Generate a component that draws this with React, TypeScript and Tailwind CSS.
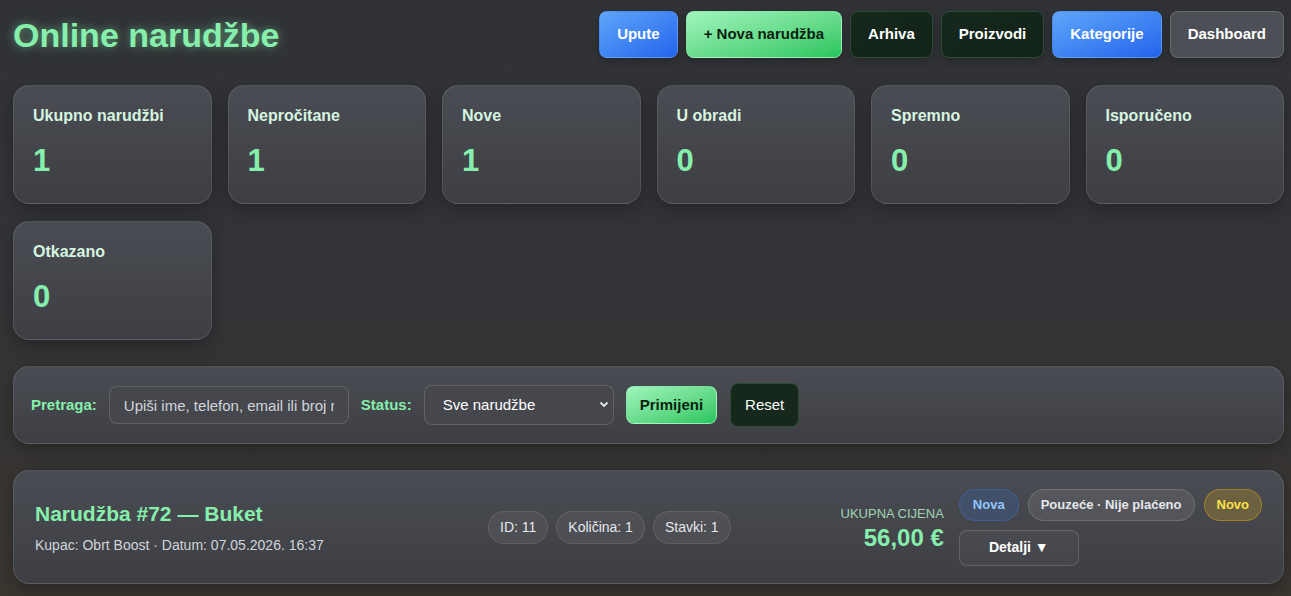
import React from 'react';

const stats = [
    { label: 'Ukupno narudžbi', value: 1 },
    { label: 'Nepročitane', value: 1 },
    { label: 'Nove', value: 1 },
    { label: 'U obradi', value: 0 },
    { label: 'Spremno', value: 0 },
    { label: 'Isporučeno', value: 0 },
    { label: 'Otkazano', value: 0 },
];

const navButtons = [
    { label: 'Upute', cls: 'bg-gradient-to-br from-[#60a5fa] to-[#2563eb] text-white border-[#60a5fa]/40' },
    { label: '+ Nova narudžba', cls: 'bg-gradient-to-br from-[#9ef5bd] to-[#22c55e] text-[#0b1f12] border-[#bbf7d0]/50' },
    { label: 'Arhiva', cls: 'bg-gradient-to-br from-[#16291d] to-[#122318] text-white border-[#2c4a36]' },
    { label: 'Proizvodi', cls: 'bg-gradient-to-br from-[#16291d] to-[#122318] text-white border-[#2c4a36]' },
    { label: 'Kategorije', cls: 'bg-gradient-to-br from-[#60a5fa] to-[#2563eb] text-white border-[#60a5fa]/40' },
    { label: 'Dashboard', cls: 'bg-[#4d4f56] text-white border-white/15' },
];

const card = 'rounded-2xl border border-white/10 bg-gradient-to-b from-[#4a4c53] to-[#3d3f44] shadow-[0_6px_18px_rgba(0,0,0,0.28)]';

export default function App() {
    return (
        <div
            className="min-h-[596px] bg-gradient-to-b from-[#303236] via-[#333437] to-[#3a352f] pl-[13px] pr-[7px] pt-[11px] pb-4 text-white"
            style={{ fontFamily: '"Liberation Sans", Arial, sans-serif' }}
        >
            <header className="flex items-center justify-between">
                <h1 className="text-[34px] font-bold leading-none text-[#86efac] [text-shadow:0_0_10px_rgba(134,239,172,0.55)]">
                    Online narudžbe
                </h1>
                <div className="flex gap-2">
                    {navButtons.map((b) => (
                        <button
                            key={b.label}
                            className={`h-[47px] rounded-lg border px-[17px] text-[15px] font-bold shadow-[0_3px_8px_rgba(0,0,0,0.25)] ${b.cls}`}
                        >
                            {b.label}
                        </button>
                    ))}
                </div>
            </header>

            <section className="mt-[27px] grid grid-cols-6 gap-x-4 gap-y-[17px]">
                {stats.map((s) => (
                    <div key={s.label} className={`${card} h-[119px] px-[19px] pt-[18px]`}>
                        <div className="text-[16px] font-bold text-[#d6f5e0]">{s.label}</div>
                        <div className="mt-[17px] text-[31px] font-bold leading-none text-[#86efac]">{s.value}</div>
                    </div>
                ))}
            </section>

            <section className={`${card} mt-[26px] flex h-[78px] items-center gap-[12px] px-[17px]`}>
                <label className="text-[15px] font-bold text-[#86efac]">Pretraga:</label>
                <input
                    className="h-[38px] w-[240px] rounded-lg border border-white/15 bg-[#45474d] px-[14px] text-[15px] text-white placeholder:text-[#d1d5db] outline-none"
                    placeholder="Upiši ime, telefon, email ili broj narudžbe"
                />
                <label className="text-[15px] font-bold text-[#86efac]">Status:</label>
                <div className="relative">
                    <select className="h-[40px] w-[190px] appearance-none rounded-lg border border-white/15 bg-[#45474d] px-[18px] text-[15px] text-white outline-none">
                        <option>Sve narudžbe</option>
                    </select>
                    <svg className="pointer-events-none absolute right-[5px] top-[16px]" width="10" height="7" viewBox="0 0 10 7">
                        <path d="M1.5 1.5 L5 5 L8.5 1.5" fill="none" stroke="#e5e7eb" strokeWidth="1.8" />
                    </svg>
                </div>
                <button className="h-[38px] rounded-lg border border-[#bbf7d0]/50 bg-gradient-to-br from-[#9ef5bd] to-[#22c55e] px-[13px] text-[15px] font-bold text-[#0b1f12]">
                    Primijeni
                </button>
                <button className="ml-[1px] h-[44px] rounded-lg border border-[#2c4a36] bg-[#15281b] px-[14px] text-[15px] text-white">
                    Reset
                </button>
            </section>

            <section className={`${card} mt-[26px] flex h-[114px] items-center px-[21px]`}>
                <div className="w-[453px]">
                    <div className="text-[21px] font-bold text-[#86efac]">Narudžba #72 — Buket</div>
                    <div className="mt-[5px] text-[14px] text-[#d1d5db]">Kupac: Obrt Boost · Datum: 07.05.2026. 16:37</div>
                </div>
                <div className="flex gap-2">
                    {['ID: 11', 'Količina: 1', 'Stavki: 1'].map((c) => (
                        <span key={c} className="flex h-[33px] items-center rounded-full border border-white/10 bg-white/[0.06] px-[11px] text-[14px] text-[#e5e7eb]">
                            {c}
                        </span>
                    ))}
                </div>
                <div className="ml-auto flex items-center gap-[15px]">
                    <div className="text-right">
                        <div className="text-[13px] text-[#bbf7d0]/80">UKUPNA CIJENA</div>
                        <div className="mt-[3px] text-[24px] font-bold leading-none text-[#86efac]">56,00 €</div>
                    </div>
                    <div className="flex flex-col items-start gap-[9px]">
                        <div className="flex gap-[9px]">
                            <span className="flex h-[32px] items-center rounded-full border border-[#3b82f6]/30 bg-[#3b5a8a]/45 px-[13px] text-[13px] font-bold text-[#93c5fd]">Nova</span>
                            <span className="flex h-[32px] items-center rounded-full border border-white/15 bg-white/[0.08] px-[12px] text-[13px] font-bold text-[#e5e7eb]">Pouzeće · Nije plaćeno</span>
                            <span className="flex h-[32px] items-center rounded-full border border-[#eab308]/40 bg-[#8a7434]/55 px-[12px] text-[13px] font-bold text-[#fde047]">Novo</span>
                        </div>
                        <button className="h-[36px] w-[120px] rounded-lg border border-white/15 bg-white/[0.03] text-[14px] font-bold text-white">
                            Detalji ▼
                        </button>
                    </div>
                </div>
            </section>
        </div>
    );
}
